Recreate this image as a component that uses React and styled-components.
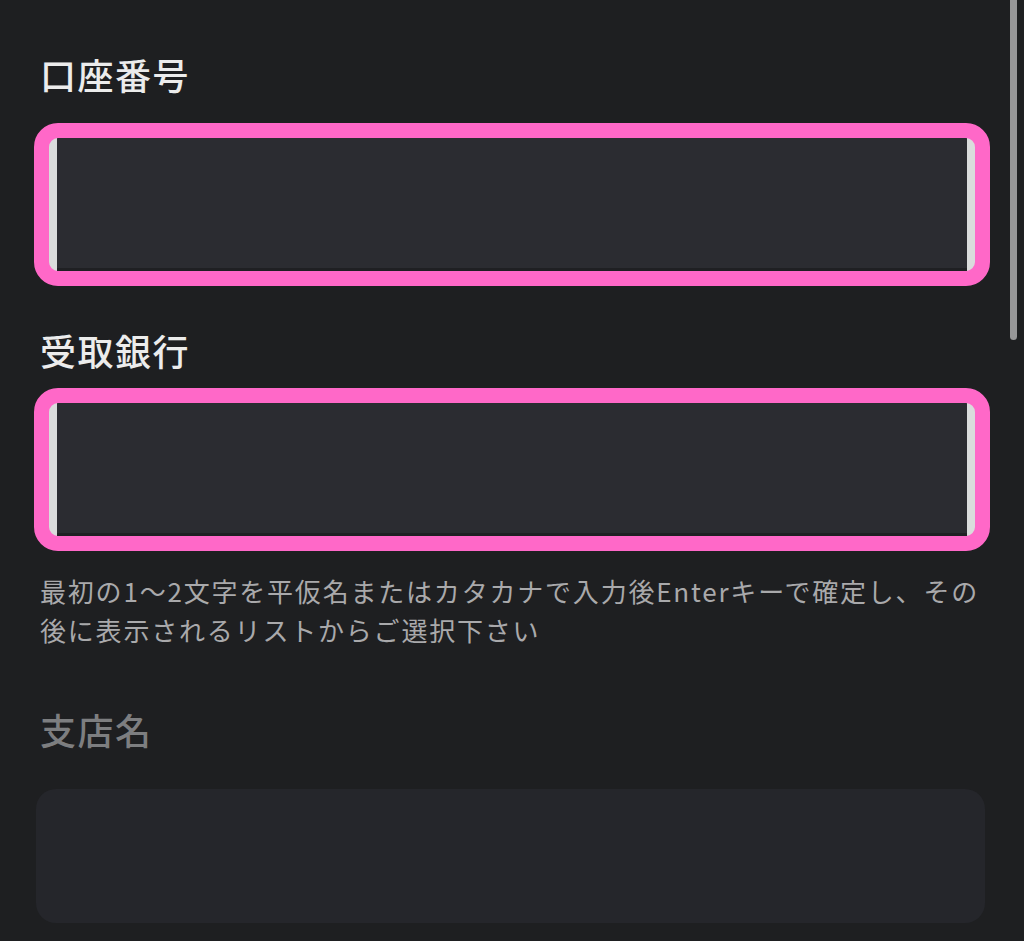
import React from "react";
import styled, { createGlobalStyle } from "styled-components";

const Global = createGlobalStyle`
  html, body {
    margin: 0;
    padding: 0;
    background: #1e1f21;
  }
  body {
    font-family: "Noto Sans CJK JP", "Noto Sans", sans-serif;
  }
`;

const Page = styled.div`
  position: relative;
  width: 1024px;
  height: 941px;
  overflow: hidden;
  background: #1e1f21;
  box-sizing: border-box;
  padding: 50px 34px 0 34px;
`;

const Field = styled.div`
  display: flex;
  flex-direction: column;
  margin-top: ${(p) => p.$top || 0}px;
`;

const Label = styled.div`
  padding-left: 6px;
  font-size: 36px;
  line-height: 48px;
  font-weight: 500;
  letter-spacing: 1.5px;
  color: ${(p) => (p.$disabled ? "#7d7e80" : "#ececec")};
  margin-bottom: ${(p) => p.$gap}px;
`;

const Highlight = styled.div`
  height: 163px;
  box-sizing: border-box;
  border: 15px solid #ff68c8;
  border-radius: 24px;
  background: #dadcdc;
  display: flex;
  padding: 0 8px;
  overflow: hidden;
`;

const Input = styled.div`
  flex: 1;
  background: #2b2c31;
  border-bottom: 3px solid #1f2023;
`;

const Help = styled.p`
  margin: 20px 0 0;
  padding-left: 6px;
  font-size: 26px;
  line-height: 39px;
  letter-spacing: 1.8px;
  color: #a9a9ab;
`;

const DisabledBox = styled.div`
  height: 134px;
  margin: 0 5px 0 2px;
  border-radius: 20px;
  background: #25262b;
`;

const Scrollbar = styled.div`
  position: absolute;
  top: 0;
  right: 7px;
  width: 7px;
  height: 340px;
  border-radius: 0 0 4px 4px;
  background: #979798;
`;

export default function App() {
  return (
    <>
      <Global />
      <Page>
        <Field>
          <Label $gap={25}>口座番号</Label>
          <Highlight>
            <Input />
          </Highlight>
        </Field>
        <Field $top={40}>
          <Label $gap={14}>受取銀行</Label>
          <Highlight>
            <Input />
          </Highlight>
        </Field>
        <Help>
          最初の1〜2文字を平仮名またはカタカナで入力後Enterキーで確定し、その
          <br />
          後に表示されるリストからご選択下さい
        </Help>
        <Field $top={56}>
          <Label $disabled $gap={36}>支店名</Label>
          <DisabledBox />
        </Field>
        <Scrollbar />
      </Page>
    </>
  );
}
